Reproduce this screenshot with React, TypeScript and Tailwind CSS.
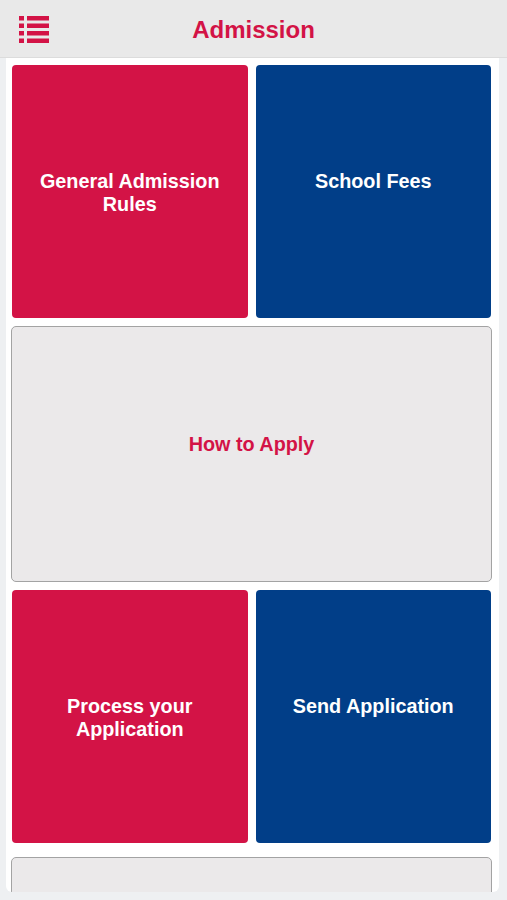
import React from "react";

const RED = "bg-[#d31346]";
const BLUE = "bg-[#013e88]";

function ListIcon() {
  return (
    <svg width="32" height="29" viewBox="0 0 32 29" className="block">
      <g fill="#d31346">
        <rect x="1" y="1" width="5" height="4.5" />
        <rect x="9" y="1" width="22" height="4.5" />
        <rect x="1" y="8.5" width="5" height="4.5" />
        <rect x="9" y="8.5" width="22" height="4.5" />
        <rect x="1" y="16" width="5" height="4.5" />
        <rect x="9" y="16" width="22" height="4.5" />
        <rect x="1" y="23.5" width="5" height="4.5" />
        <rect x="9" y="23.5" width="22" height="4.5" />
      </g>
    </svg>
  );
}

function ColorCard({ color, children }: { color: string; children: React.ReactNode }) {
  return (
    <div
      className={`${color} h-[253px] rounded-[4px] flex items-center justify-center text-center text-white font-bold text-[19.8px] leading-[23px] px-4 pt-[2px]`}
    >
      <div className="min-h-[46px]">{children}</div>
    </div>
  );
}

function GrayCard({ children, h }: { children?: React.ReactNode; h: string }) {
  return (
    <div
      className={`${h} rounded-[5px] border border-[#a3a3a3] bg-[#ebe9ea] flex items-center justify-center text-center text-[#d31346] font-bold text-[19.8px] leading-[23px] pt-[4px]`}
    >
      {children ? <div className="min-h-[46px]">{children}</div> : null}
    </div>
  );
}

export default function App() {
  return (
    <div
      className="w-[507px] h-[900px] bg-[#eef0f2] flex flex-col overflow-hidden"
      style={{ fontFamily: '"Liberation Sans", Arial, sans-serif' }}
    >
      <header className="h-[58px] shrink-0 bg-[#e9e9e9] border-b border-[#dcdcdc] grid grid-cols-[1fr_auto_1fr] items-center">
        <div className="pl-[18px] pt-[1px]">
          <ListIcon />
        </div>
        <h1 className="text-[24px] font-bold text-[#d31346] leading-none pt-[3px]">Admission</h1>
        <div />
      </header>
      <main className="ml-[6px] w-[493px] h-[834px] shrink-0 bg-white rounded-b-[6px] overflow-hidden pl-[5px] pr-[7px] pt-[7px] flex flex-col">
        <div className="grid grid-cols-2 gap-[8px] mx-[1px]">
          <ColorCard color={RED}>
            General Admission
            <br />
            Rules
          </ColorCard>
          <ColorCard color={BLUE}>School Fees</ColorCard>
        </div>
        <div className="mt-[8px]">
          <GrayCard h="h-[256px]">How to Apply</GrayCard>
        </div>
        <div className="grid grid-cols-2 gap-[8px] mx-[1px] mt-[8px]">
          <ColorCard color={RED}>
            Process your
            <br />
            Application
          </ColorCard>
          <ColorCard color={BLUE}>Send Application</ColorCard>
        </div>
        <div className="mt-[14px]">
          <GrayCard h="h-[256px]" />
        </div>
      </main>
    </div>
  );
}
